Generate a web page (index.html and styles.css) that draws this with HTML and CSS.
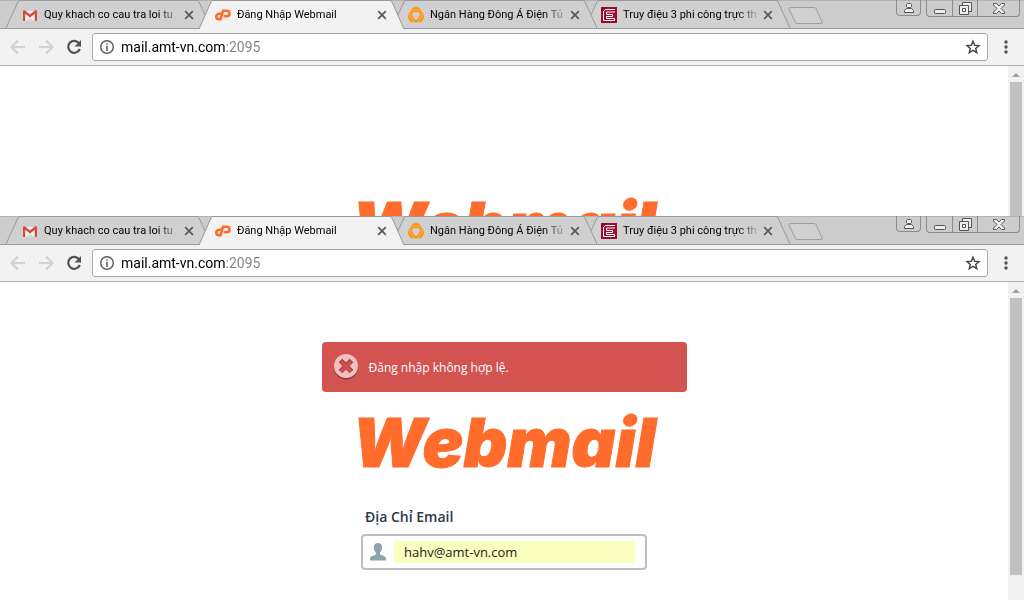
FILE: index.html
```html
<!DOCTYPE html>
<html lang="vi">
<head>
  <meta charset="utf-8">
  <title>Đăng Nhập Webmail</title>
  <link rel="stylesheet" href="styles.css">
</head>
<body>
  <!-- shared icons -->
  <svg class="sprite" width="0" height="0" aria-hidden="true">
    <symbol id="tab-shape" viewBox="0 0 205 29" preserveAspectRatio="none">
      <path d="M0 29 L12 2 Q12.500 .5 14 .5 H191 Q192.500 .5 193 2 L205 29"/>
    </symbol>
    <symbol id="gmail" viewBox="0 0 16 16">
      <path fill="#f2f2f2" d="M2 4h12v10H2z"/>
      <path fill="#d8d8d8" d="M4 14l4-4 4 4z"/>
      <path fill="#d54b3d" d="M1 4.500C1 3 2.500 3 3.200 3.600L8 7.500l4.800-3.900C13.500 3 15 3 15 4.500V14h-2.200V6.800L8 10.600 3.200 6.800V14H1z"/>
    </symbol>
    <symbol id="cpanel" viewBox="0 0 16 16">
      <g fill="none" stroke="#ff6c2c" stroke-width="2.600">
        <path d="M6.500 6.800H4a2.700 2.700 0 0 0 0 5.400h1.500L7.900 3.800h3.900a2.700 2.700 0 0 1 0 5.400H8.600"/>
      </g>
    </symbol>
    <symbol id="donga" viewBox="0 0 16 16">
      <path fill="#f9981d" d="M8 0c3 0 4.800 2 5.500 4.200C15.500 6.500 16.500 9 15.500 12c-1 2.800-3.500 3.600-5.500 3.300-1.300.4-2.700.4-4 0C4 15.600 1.500 14.800.5 12c-1-3 0-5.500 2-7.800C3.200 2 5 0 8 0z"/>
      <path fill="#d0d0d0" d="M4.500 6C6 4.700 10 4.700 11.500 6c.6 2.300-.8 5.200-3.500 6.800C5.300 11.200 3.900 8.300 4.500 6z"/>
      <path fill="none" stroke="#fbc274" stroke-width=".7" d="M3 5.500C5 2 11 2 13 5.500M2.500 7c-.5 3 1.500 6 4 7.300M13.500 7c.5 3-1.500 6-4 7.300"/>
    </symbol>
    <symbol id="enews" viewBox="0 0 16 16">
      <path fill="#9b0a2b" d="M0 0h16v16H0z"/>
      <path fill="none" stroke="#fff" d="M14 2.500H4.500l-2 2v9h11v-2h-8v-2h6v-2h-6v-2.500H14"/>
    </symbol>
    <symbol id="close" viewBox="0 0 10 10">
      <path fill="none" stroke="#5a5a5a" stroke-width="1.700" d="M1.200 1.200l7.600 7.600M8.800 1.200L1.200 8.800"/>
    </symbol>
    <symbol id="new-tab" viewBox="0 0 35 18">
      <path d="M2.500.5H26q1.500 0 2 1.200L34 15q.5 1.500-1 1.500H9.500q-1.500 0-2-1.200L1 2Q.5.5 2.500.5z"/>
    </symbol>
    <symbol id="arrow" viewBox="0 0 16 16">
      <path fill="none" stroke="currentColor" stroke-width="2" d="M15 8H2M8 1.500L1.500 8 8 14.500"/>
    </symbol>
    <symbol id="reload" viewBox="0 0 16 16">
      <path fill="none" stroke="currentColor" stroke-width="2.200" d="M13.200 4.500A6 6 0 1 0 13.800 10"/>
      <path fill="currentColor" d="M15 1v6.500H8.500z"/>
    </symbol>
    <symbol id="info" viewBox="0 0 16 16">
      <circle cx="8" cy="8" r="6.300" fill="none" stroke="#5a5a5a" stroke-width="1.400"/>
      <path fill="#5a5a5a" d="M7.200 4.200h1.600v1.600H7.200zM7.200 7h1.600v5H7.200z"/>
    </symbol>
    <symbol id="star" viewBox="0 0 16 16">
      <path fill="none" stroke="#4a4a4a" stroke-width="1.500" stroke-linejoin="miter" d="M8 2.200l1.700 4 4.300.4-3.300 2.800 1 4.200L8 11.400l-3.700 2.200 1-4.200L2 6.600l4.300-.4z"/>
    </symbol>
    <symbol id="dots" viewBox="0 0 4 16">
      <circle cx="2" cy="3" r="1.700"/><circle cx="2" cy="8" r="1.700"/><circle cx="2" cy="13" r="1.700"/>
    </symbol>
    <symbol id="person" viewBox="0 0 12 12">
      <path d="M3.500 2.500l1-1h3l1 1v2l-1 1h-3l-1-1zM1.500 10.500v-2l2-2h5l2 2v2z"/>
    </symbol>
    <symbol id="minimize" viewBox="0 0 12 12">
      <rect x=".5" y="7.500" width="11" height="4" rx="1"/>
    </symbol>
    <symbol id="restore" viewBox="0 0 13 13">
      <path d="M3.500 3.500v-3h9v9h-3M.5 3.500h9v9h-9zM3.500 6.500h3v3h-3z"/>
    </symbol>
    <symbol id="exit" viewBox="0 0 12 11">
      <path d="M.5.500h3L6 3 8.500.5h3v1.500L8 5.500 11.500 9v1.500h-3L6 8l-2.500 2.500h-3V9L4 5.500.5 2z"/>
    </symbol>
  </svg>

  <section class="window window-back">
    <header class="tab-strip">
      <nav class="tabs">
        <div class="tab">
          <svg class="tab-shape"><use href="#tab-shape"/></svg>
          <svg class="favicon"><use href="#gmail"/></svg>
          <span class="tab-title">Quy khach co cau tra loi tu</span>
          <button class="tab-close" aria-label="Close tab"><svg><use href="#close"/></svg></button>
        </div>
        <div class="tab active">
          <svg class="tab-shape"><use href="#tab-shape"/></svg>
          <svg class="favicon"><use href="#cpanel"/></svg>
          <span class="tab-title">Đăng Nhập Webmail</span>
          <button class="tab-close" aria-label="Close tab"><svg><use href="#close"/></svg></button>
        </div>
        <div class="tab">
          <svg class="tab-shape"><use href="#tab-shape"/></svg>
          <svg class="favicon"><use href="#donga"/></svg>
          <span class="tab-title">Ngân Hàng Đông Á Điện Tử</span>
          <button class="tab-close" aria-label="Close tab"><svg><use href="#close"/></svg></button>
        </div>
        <div class="tab">
          <svg class="tab-shape"><use href="#tab-shape"/></svg>
          <svg class="favicon"><use href="#enews"/></svg>
          <span class="tab-title">Truy điệu 3 phi công trực th</span>
          <button class="tab-close" aria-label="Close tab"><svg><use href="#close"/></svg></button>
        </div>
        <button class="new-tab" aria-label="New tab"><svg><use href="#new-tab"/></svg></button>
      </nav>
      <div class="window-controls">
        <button class="control profile" aria-label="Profile"><svg width="12" height="12"><use href="#person"/></svg></button>
        <div class="control-group">
          <button class="control" aria-label="Minimize"><svg width="12" height="12"><use href="#minimize"/></svg></button>
          <button class="control" aria-label="Restore"><svg width="13" height="13"><use href="#restore"/></svg></button>
          <button class="control exit" aria-label="Close"><svg width="12" height="11"><use href="#exit"/></svg></button>
        </div>
      </div>
    </header>
    <div class="toolbar">
      <button class="tool disabled" aria-label="Back"><svg><use href="#arrow"/></svg></button>
      <button class="tool disabled forward" aria-label="Forward"><svg><use href="#arrow"/></svg></button>
      <button class="tool" aria-label="Reload"><svg><use href="#reload"/></svg></button>
      <div class="address">
        <svg class="address-icon"><use href="#info"/></svg>
        <input class="url" type="text" aria-label="Address" value="mail.amt-vn.com:2095">
        <button class="bookmark" aria-label="Bookmark"><svg><use href="#star"/></svg></button>
      </div>
      <button class="menu" aria-label="Menu"><svg><use href="#dots"/></svg></button>
    </div>
    <div class="viewport">
      <main class="page">
        <div class="notice"></div>
        <div class="logo">Webmail</div>
      </main>
      <div class="scrollbar"><span class="scroll-up"></span><span class="thumb"></span></div>
    </div>
  </section>

  <section class="window window-front">
    <header class="tab-strip">
      <nav class="tabs">
        <div class="tab">
          <svg class="tab-shape"><use href="#tab-shape"/></svg>
          <svg class="favicon"><use href="#gmail"/></svg>
          <span class="tab-title">Quy khach co cau tra loi tu</span>
          <button class="tab-close" aria-label="Close tab"><svg><use href="#close"/></svg></button>
        </div>
        <div class="tab active">
          <svg class="tab-shape"><use href="#tab-shape"/></svg>
          <svg class="favicon"><use href="#cpanel"/></svg>
          <span class="tab-title">Đăng Nhập Webmail</span>
          <button class="tab-close" aria-label="Close tab"><svg><use href="#close"/></svg></button>
        </div>
        <div class="tab">
          <svg class="tab-shape"><use href="#tab-shape"/></svg>
          <svg class="favicon"><use href="#donga"/></svg>
          <span class="tab-title">Ngân Hàng Đông Á Điện Tử</span>
          <button class="tab-close" aria-label="Close tab"><svg><use href="#close"/></svg></button>
        </div>
        <div class="tab">
          <svg class="tab-shape"><use href="#tab-shape"/></svg>
          <svg class="favicon"><use href="#enews"/></svg>
          <span class="tab-title">Truy điệu 3 phi công trực th</span>
          <button class="tab-close" aria-label="Close tab"><svg><use href="#close"/></svg></button>
        </div>
        <button class="new-tab" aria-label="New tab"><svg><use href="#new-tab"/></svg></button>
      </nav>
      <div class="window-controls">
        <button class="control profile" aria-label="Profile"><svg width="12" height="12"><use href="#person"/></svg></button>
        <div class="control-group">
          <button class="control" aria-label="Minimize"><svg width="12" height="12"><use href="#minimize"/></svg></button>
          <button class="control" aria-label="Restore"><svg width="13" height="13"><use href="#restore"/></svg></button>
          <button class="control exit" aria-label="Close"><svg width="12" height="11"><use href="#exit"/></svg></button>
        </div>
      </div>
    </header>
    <div class="toolbar">
      <button class="tool disabled" aria-label="Back"><svg><use href="#arrow"/></svg></button>
      <button class="tool disabled forward" aria-label="Forward"><svg><use href="#arrow"/></svg></button>
      <button class="tool" aria-label="Reload"><svg><use href="#reload"/></svg></button>
      <div class="address">
        <svg class="address-icon"><use href="#info"/></svg>
        <input class="url" type="text" aria-label="Address" value="mail.amt-vn.com:2095">
        <button class="bookmark" aria-label="Bookmark"><svg><use href="#star"/></svg></button>
      </div>
      <button class="menu" aria-label="Menu"><svg><use href="#dots"/></svg></button>
    </div>
    <div class="viewport">
      <main class="page">
        <div class="notice error" role="alert">
          <svg class="notice-icon" viewBox="0 0 26 27">
            <circle cx="13" cy="13.500" r="12" fill="#8f3434"/>
            <circle cx="13" cy="12" r="12" fill="#f0c0c0"/>
            <path fill="none" stroke="#a83a3a" stroke-width="5" d="M7.500 6.500l11 11M18.500 6.500l-11 11"/>
            <path fill="none" stroke="#cc5150" stroke-width="3.500" d="M8 7.500l10 10M18 7.500l-10 10"/>
          </svg>
          <span>Đăng nhập không hợp lệ.</span>
        </div>
        <div class="logo">Webmail</div>
        <form class="login-form">
          <label for="user">Địa Chỉ Email</label>
          <div class="field">
            <svg class="field-icon" viewBox="0 0 16 18">
              <path fill="#8fa5ad" d="M8 0c2.800 0 4.200 1.800 4.200 4.500 0 2-.8 4-2.200 5v2c2 1.200 6 1.300 6 4.500v1.500H0V16c0-3.200 4-3.300 6-4.500v-2c-1.400-1-2.200-3-2.200-5C3.800 1.800 5.200 0 8 0z"/>
            </svg>
            <input type="text" id="user" name="user" value="hahv@amt-vn.com">
          </div>
        </form>
      </main>
      <div class="scrollbar"><span class="scroll-up"></span><span class="thumb"></span></div>
    </div>
  </section>
</body>
</html>
```

FILE: styles.css
```css
* {
  box-sizing: border-box;
}
body {
  margin: 0;
  background-color: #fff;
  font-family: "Open Sans", sans-serif;
}
button {
  padding: 0;
  border: none;
  background: none;
  cursor: pointer;
}
svg {
  display: block;
  flex: none;
}
.sprite {
  position: absolute;
}

/* browser windows */
.window {
  display: flex;
  flex-direction: column;
  overflow: hidden;
}
.window-back { height: 36vh; }
.window-front { height: 64vh; }

/* tabs */
.tab-strip {
  display: flex;
  justify-content: space-between;
  flex: none;
  height: 29px;
  padding: 0 4px 0 6px;
  background-color: #cccccc;
  border-top: 1px solid #b4b4b4;
  box-shadow: inset 0 -1px #999;
}
.tabs,
.window-controls {
  display: flex;
  margin-top: -1px;
}
.tab {
  position: relative;
  display: flex;
  align-items: center;
  width: 205px;
  height: 29px;
  padding: 0 16px;
  isolation: isolate;
}
.tab + .tab { margin-left: -12px; }
.tab:nth-child(1) { z-index: 4; }
.tab:nth-child(2) { z-index: 3; }
.tab:nth-child(3) { z-index: 2; }
.tab:nth-child(4) { z-index: 1; }
.tab.active { z-index: 5; }
.tab-shape {
  position: absolute;
  inset: 0;
  z-index: -1;
  width: 100%;
  height: 28px;
  fill: #d0d0d0;
  stroke: #999;
}
.tab.active .tab-shape {
  height: 29px;
  fill: #f2f2f2;
}
.favicon {
  width: 16px;
  height: 16px;
  margin-right: 6px;
}
.tab-title {
  flex: 1;
  overflow: hidden;
  white-space: nowrap;
  font-family: Roboto, sans-serif;
  font-size: 11px;
  line-height: 16px;
  color: #000;
  -webkit-mask-image: linear-gradient(to right, #000 114px, transparent 138px);
  mask-image: linear-gradient(to right, #000 114px, transparent 138px);
}
.tab-close {
  margin-left: 6px;
  padding: 1px;
}
.tab-close svg {
  width: 10px;
  height: 10px;
}
.new-tab {
  align-self: flex-start;
  margin: 7px 0 0 -2px;
}
.new-tab svg {
  width: 35px;
  height: 18px;
  fill: #d0d0d0;
  stroke: #a0a0a0;
}

/* window buttons */
.window-controls {
  align-items: flex-start;
  gap: 5px;
}
.control {
  display: flex;
  align-items: center;
  justify-content: center;
  width: 25px;
  height: 16px;
}
.control svg {
  fill: #eee;
  stroke: #555;
}
.profile,
.control-group {
  border: 1px solid #8c8c8c;
  border-top: none;
  border-radius: 0 0 4px 4px;
}
.control-group { display: flex; }
.control-group .control + .control { border-left: 1px solid #8c8c8c; }
.control.exit { width: 42px; }

/* toolbar */
.toolbar {
  display: flex;
  align-items: center;
  flex: none;
  height: 37px;
  padding: 0 16px 0 10px;
  background-color: #f2f2f2;
  border-bottom: 1px solid #b0b0b0;
}
.tool {
  margin-right: 12px;
  color: #505050;
}
.tool svg {
  width: 16px;
  height: 16px;
}
.disabled { color: #d0d0d0; }
.forward svg { transform: scaleX(-1); }
.address {
  display: flex;
  align-items: center;
  flex: 1;
  height: 28px;
  margin: 0 16px 0 -2px;
  padding: 0 6px;
  background-color: #fff;
  border: 1px solid #a8a8a8;
  border-radius: 3px;
}
.address-icon {
  width: 16px;
  height: 16px;
}
.url {
  flex: 1;
  height: 24px;
  margin-left: 6px;
  padding: 0;
  border: none;
  outline: none;
  font-family: Roboto, sans-serif;
  font-size: 14px;
  /* host dark, port grey */
  color: transparent;
  background: linear-gradient(to right, #000 105px, #808080 105px);
  -webkit-background-clip: text;
  background-clip: text;
}
.bookmark svg {
  width: 16px;
  height: 16px;
}
.menu svg {
  width: 4px;
  height: 16px;
  fill: #505050;
}

/* page area */
.viewport {
  display: flex;
  flex: 1;
  min-height: 0;
}
.page {
  display: flex;
  flex-direction: column;
  align-items: center;
  flex: 1;
  padding-top: 60px;
}
.scrollbar {
  display: flex;
  flex-direction: column;
  align-items: center;
  width: 16px;
  background-color: #f1f1f1;
}
.scroll-up {
  margin: 7px 0 5px;
  border: 4px solid transparent;
  border-top: none;
  border-bottom-color: #a0a0a0;
}
.thumb {
  flex: 1;
  width: 12px;
  background-color: #c1c1c1;
}
.window-front .thumb { margin-bottom: 25px; }

/* login page */
.notice {
  display: flex;
  align-items: center;
  flex: none;
  width: 365px;
  height: 50px;
  margin-bottom: 25px;
  padding: 0 11px;
}
.error {
  background-color: #d35351;
  border-radius: 4px;
  color: #fff;
  font-size: 12px;
}
.notice-icon {
  width: 26px;
  height: 27px;
  margin-right: 10px;
}
.logo {
  flex: none;
  font-family: Inter, sans-serif;
  font-size: 68px;
  font-style: italic;
  font-weight: 900;
  line-height: 50px;
  color: #ff6c2c;
  -webkit-text-stroke: 1px #ff6c2c;
}
.login-form {
  width: 286px;
  margin-top: 40px;
}
.login-form label {
  display: block;
  margin-bottom: 7px;
  padding-left: 4px;
  font-size: 14px;
  font-weight: 600;
  line-height: 20px;
  color: #293a4a;
}
.field {
  display: flex;
  align-items: center;
  height: 36px;
  padding: 0 10px 0 7px;
  border: 2px solid #bebebe;
  border-radius: 4px;
}
.field-icon {
  width: 16px;
  height: 18px;
  margin-right: 8px;
}
.field input {
  flex: 1;
  min-width: 0;
  height: 22px;
  padding: 0 10px;
  border: none;
  border-radius: 2px;
  outline: none;
  background-color: #faffbd;
  font-family: "Open Sans", sans-serif;
  font-size: 13px;
  color: #222;
}
```
